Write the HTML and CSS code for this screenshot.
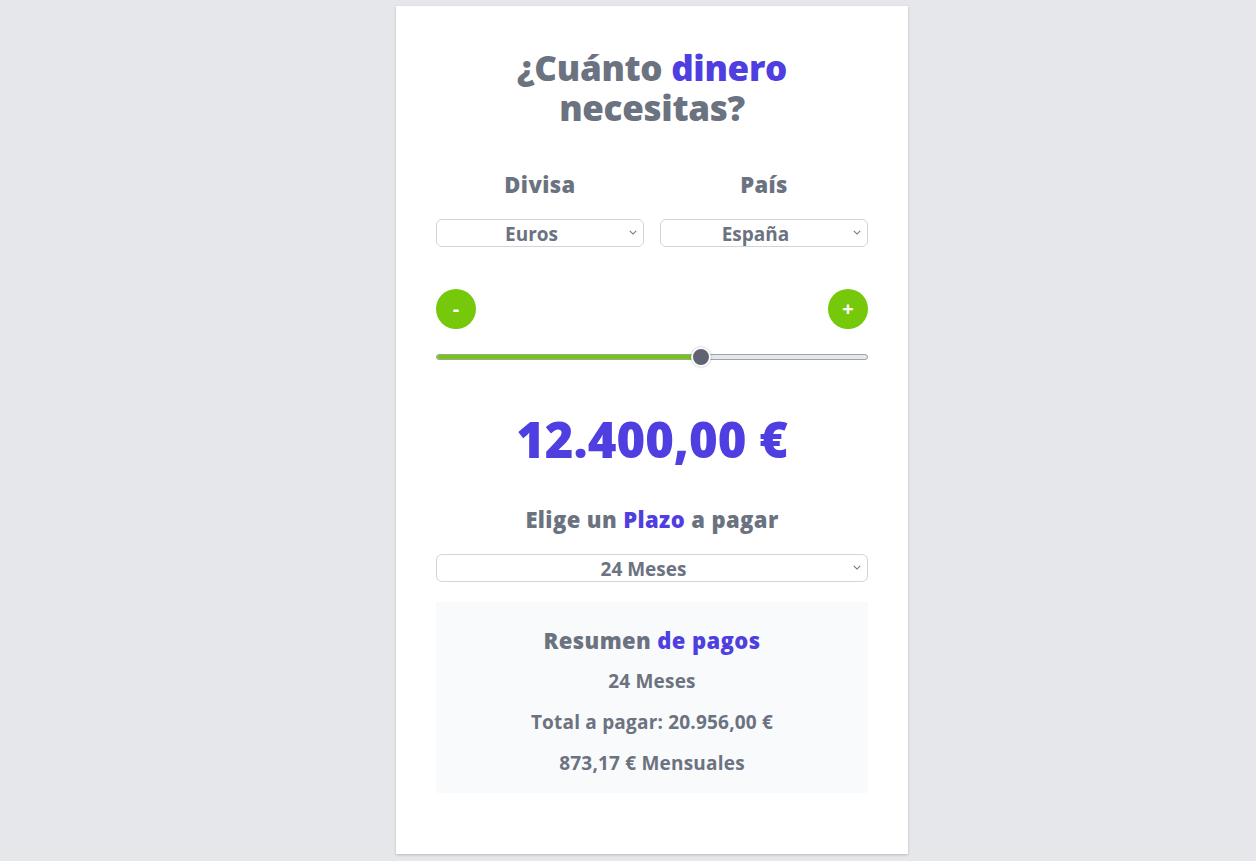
FILE: index.html
```html
<!DOCTYPE html>
<html lang="es">
<head>
<meta charset="utf-8">
<title>¿Cuánto dinero necesitas?</title>
<link rel="stylesheet" href="styles.css">
</head>
<body>
<main class="card">
  <h1 class="title"><span class="tline">¿Cuánto <span class="accent">dinero</span></span> <span class="tline">necesitas?</span></h1>

  <div class="pair">
    <div class="field">
      <h2 class="label">Divisa</h2>
      <div class="select"><span>Euros</span><svg class="chev" viewBox="0 0 10 6" width="8" height="5"><path d="M1 1l4 4 4-4" fill="none" stroke="#6b7280" stroke-width="1.3"/></svg></div>
    </div>
    <div class="field">
      <h2 class="label">País</h2>
      <div class="select"><span>España</span><svg class="chev" viewBox="0 0 10 6" width="8" height="5"><path d="M1 1l4 4 4-4" fill="none" stroke="#6b7280" stroke-width="1.3"/></svg></div>
    </div>
  </div>

  <div class="steppers">
    <button class="step">-</button>
    <button class="step">+</button>
  </div>

  <div class="slider">
    <div class="track"><div class="fill" style="width:61.3%"></div></div>
    <div class="thumb" style="left:61.3%"></div>
  </div>

  <p class="amount">12.400,00 €</p>

  <h2 class="label plazo">Elige un <span class="accent">Plazo</span> a pagar</h2>
  <div class="select"><span>24 Meses</span><svg class="chev" viewBox="0 0 10 6" width="8" height="5"><path d="M1 1l4 4 4-4" fill="none" stroke="#6b7280" stroke-width="1.3"/></svg></div>

  <section class="summary">
    <h2 class="label">Resumen <span class="accent">de pagos</span></h2>
    <p class="line">24 Meses</p>
    <p class="line">Total a pagar: 20.956,00 €</p>
    <p class="line">873,17 € Mensuales</p>
  </section>
</main>
</body>
</html>
```

FILE: styles.css
```css
* { box-sizing: border-box; }
html, body { margin: 0; padding: 0; }
body {
  background: #e5e7eb;
  font-family: "Open Sans", "Noto Sans", sans-serif;
  color: #6b7280;
  min-height: 861px;
  display: flex;
  justify-content: center;
  padding: 6px 0 0 48px;
}
.card {
  width: 512px;
  height: 848px;
  background: #fff;
  padding: 40px 40px 0;
  box-shadow: 0 1px 3px rgba(0,0,0,0.12), 0 1px 2px rgba(0,0,0,0.08);
  display: flex;
  flex-direction: column;
}
.accent { color: #4f3ee0; }
.title {
  margin: 2px 0 0;
  text-align: center;
  font-size: 35px;
  line-height: 40px;
  font-weight: 800;
  letter-spacing: -0.3px;
  display: flex;
  flex-direction: column;
  align-items: center;
}
.tline { display: block; height: 40px; line-height: 40px; }
.pair {
  display: grid;
  grid-template-columns: 1fr 1fr;
  gap: 16px;
  margin-top: 42px;
}
.field { display: flex; flex-direction: column; }
.label {
  margin: 0;
  text-align: center;
  font-size: 22px;
  line-height: 28px;
  font-weight: 800;
  letter-spacing: 0.4px;
}
.select {
  position: relative;
  height: 28px;
  border: 1px solid #d1d5db;
  border-radius: 6px;
  display: flex;
  align-items: center;
  justify-content: center;
  padding-right: 17px;
  font-size: 19px;
  font-weight: 700;
  margin-top: 21px;
}
.select span { line-height: 26px; padding-top: 2px; }
.chev { position: absolute; right: 6px; top: 10px; }
.steppers {
  display: flex;
  justify-content: space-between;
  margin-top: 42px;
}
.step {
  width: 40px;
  height: 40px;
  border-radius: 50%;
  border: none;
  background: #76c80a;
  color: #fff;
  font-family: inherit;
  font-size: 20px;
  font-weight: 700;
  padding: 0;
  line-height: 40px;
}
.slider {
  position: relative;
  height: 20px;
  margin-top: 18px;
}
.track {
  position: absolute;
  left: 0; right: 0; top: 7px;
  height: 6px;
  border-radius: 3px;
  background: #e5e7eb;
  border: 1px solid #9ca3af;
  overflow: hidden;
}
.fill {
  height: 100%;
  background: #76c80a;
}
.thumb {
  position: absolute;
  top: 0;
  width: 20px;
  height: 20px;
  margin-left: -10px;
  border-radius: 50%;
  background: #5f6372;
  border: 2px solid #fff;
  box-shadow: 0 0 2px rgba(0,0,0,0.35);
}
.amount {
  margin: 44px 0 0;
  text-align: center;
  font-size: 49px;
  line-height: 56px;
  font-weight: 800;
  color: #4f3ee0;
}
.plazo { margin-top: 38px; }
.plazo + .select { margin-top: 21px; }
.summary {
  margin-top: 20px;
  background: #f9fafb;
  height: 191px;
  padding-top: 24px;
  text-align: center;
}
.line {
  margin: 13px 0 0;
  font-size: 19px;
  line-height: 28px;
  font-weight: 700;
  letter-spacing: 0.2px;
}
```
